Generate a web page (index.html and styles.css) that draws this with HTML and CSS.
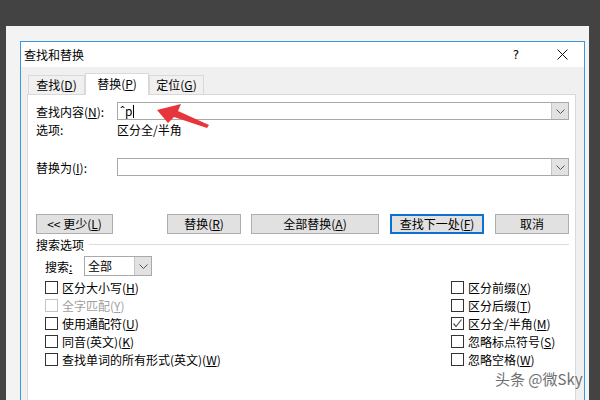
FILE: index.html
```html
<!DOCTYPE html>
<html lang="zh">
<head>
<meta charset="utf-8">
<title>查找和替换</title>
<link rel="stylesheet" href="styles.css">
</head>
<body>
<div class="screen">
  <div class="outer">
    <div class="dialog">
      <div class="titlebar">
        <span class="title">查找和替换</span>
        <span class="help">?</span>
        <span class="close">
          <svg width="11" height="11" viewBox="0 0 11 11"><path d="M0.5 0.5 L10.5 10.5 M10.5 0.5 L0.5 10.5" stroke="#111" stroke-width="1" fill="none"/></svg>
        </span>
      </div>
      <div class="dbody">
        <div class="tabs">
          <div class="tab t1">查找(<u>D</u>)</div>
          <div class="tab active">替换(<u>P</u>)</div>
          <div class="tab t3">定位(<u>G</u>)</div>
        </div>
        <div class="panel">
          <div class="row find">
            <span class="label">查找内容(<u>N</u>):</span>
            <div class="combo">
              <span class="val">ˆp<span class="caret"></span></span>
              <span class="drop"><svg width="9" height="5" viewBox="0 0 9 5"><path d="M0.5 0.5 L4.5 4.5 L8.5 0.5" stroke="#555" fill="none"/></svg></span>
            </div>
          </div>
          <div class="row opts">
            <span class="label">选项:</span>
            <span>区分全/半角</span>
          </div>
          <div class="row replace">
            <span class="label">替换为(<u>I</u>):</span>
            <div class="combo">
              <span class="val"></span>
              <span class="drop"><svg width="9" height="5" viewBox="0 0 9 5"><path d="M0.5 0.5 L4.5 4.5 L8.5 0.5" stroke="#555" fill="none"/></svg></span>
            </div>
          </div>
          <div class="buttons">
            <div class="btn more">&lt;&lt; 更少(<u>L</u>)</div>
            <div class="spacer"></div>
            <div class="btn rep">替换(<u>R</u>)</div>
            <div class="btn all">全部替换(<u>A</u>)</div>
            <div class="btn next">查找下一处(<u>F</u>)</div>
            <div class="btn cancel">取消</div>
          </div>
          <div class="group">
            <span>搜索选项</span>
            <span class="rule"></span>
          </div>
          <div class="search">
            <span class="slabel">搜索<u>:</u></span>
            <div class="select">
              <span class="val">全部</span>
              <span class="drop sdrop"><svg width="9" height="5" viewBox="0 0 9 5"><path d="M0.5 0.5 L4.5 4.5 L8.5 0.5" stroke="#555" fill="none"/></svg></span>
            </div>
          </div>
          <div class="checks">
            <div class="col">
              <div class="chk"><span class="box"></span>区分大小写(<u>H</u>)</div>
              <div class="chk disabled"><span class="box"></span>全字匹配(<u>Y</u>)</div>
              <div class="chk"><span class="box"></span>使用通配符(<u>U</u>)</div>
              <div class="chk"><span class="box"></span>同音(英文)(<u>K</u>)</div>
              <div class="chk"><span class="box"></span>查找单词的所有形式(英文)(<u>W</u>)</div>
            </div>
            <div class="col">
              <div class="chk"><span class="box"></span>区分前缀(<u>X</u>)</div>
              <div class="chk"><span class="box"></span>区分后缀(<u>T</u>)</div>
              <div class="chk"><span class="box checked"><svg width="11" height="11" viewBox="0 0 11 11"><path d="M1.5 5.5 L4 8.5 L9.5 1.5" stroke="#555" stroke-width="1.2" fill="none"/></svg></span>区分全/半角(<u>M</u>)</div>
              <div class="chk"><span class="box"></span>忽略标点符号(<u>S</u>)</div>
              <div class="chk"><span class="box"></span>忽略空格(<u>W</u>)</div>
            </div>
          </div>
        </div>
      </div>
    </div>
  </div>
</div>
<svg class="arrow" width="70" height="35" viewBox="0 0 70 35">
  <polygon points="7,10 31,4 28,11 59,25 57,28 24,17 18,23" fill="#e6363c"/>
</svg>
<div class="watermark">头条 @微Sky</div>
</body>
</html>
```
FILE: styles.css
```css
* { box-sizing: border-box; margin: 0; padding: 0; }
html, body { width: 600px; height: 400px; overflow: hidden; }
body {
  background: #434343;
  font-family: "Noto Sans CJK SC", "Noto Sans", sans-serif;
  font-size: 12px;
  color: #000;
  position: relative;
}
u { text-decoration: underline; text-underline-offset: 1px; }

.screen { padding-top: 26px; }
.outer {
  margin-left: 6px;
  width: 583px;
  height: 374px;
  background: #f3f3f3;
  padding: 15px 0 0 14px;
  overflow: hidden;
}
.dialog {
  width: 565px;
  height: 370px;
  border: 1px solid #3a96dd;
  background: #f0f0f0;
  display: flex;
  flex-direction: column;
}
.titlebar {
  flex: none;
  height: 25px;
  background: #fff;
  display: flex;
  align-items: center;
  padding-left: 3px;
}
.title { flex: 1; line-height: 25px; }
.help { width: 50px; text-align: center; font-family: "DejaVu Sans", sans-serif; font-size: 12px; }
.close { width: 43px; display: flex; justify-content: center; align-items: center; }

.dbody {
  flex: 1;
  display: flex;
  flex-direction: column;
  padding: 6px 8px 0 6px;
}
.tabs {
  flex: none;
  height: 21px;
  display: flex;
  align-items: flex-end;
  padding-left: 1px;
}
.tab {
  height: 19px;
  border: 1px solid #d9d9d9;
  border-bottom: none;
  background: #f0f0f0;
  display: flex;
  align-items: center;
  justify-content: center;
  line-height: 1;
}
.t1 { width: 57px; }
.t3 { width: 55px; }
.tab.active {
  width: 64px;
  height: 22px;
  margin-bottom: -1px;
  background: #fff;
  position: relative;
  z-index: 1;
  padding-bottom: 2px;
}
.panel {
  flex: 1;
  background: #fff;
  border: 1px solid #d9d9d9;
  border-bottom: none;
  padding: 0 6px 0 8px;
}

.row { display: flex; align-items: center; }
.label { width: 81px; flex: none; }
.find { margin-top: 7px; height: 18px; }
.opts { height: 18px; }
.replace { margin-top: 20px; height: 18px; }
.combo {
  flex: 1;
  height: 18px;
  border: 1px solid #a9a9a9;
  background: #fff;
  display: flex;
  align-items: center;
}
.val { flex: 1; padding-left: 2px; display: flex; align-items: center; line-height: 1; }
.caret { display: inline-block; width: 1px; height: 13px; background: #000; margin-left: 1px; }
.drop {
  width: 17px;
  height: 16px;
  background: #e2e2e2;
  border-left: 1px solid #c4c4c4;
  display: flex;
  align-items: center;
  justify-content: center;
  flex: none;
}

.buttons { margin-top: 38px; height: 20px; display: flex; }
.btn {
  height: 20px;
  border: 1px solid #adadad;
  background: #e1e1e1;
  display: flex;
  align-items: center;
  justify-content: center;
  line-height: 1;
  flex: none;
}
.spacer { flex: 1; }
.more { width: 77px; }
.rep { width: 74px; }
.all { width: 128px; margin-left: 10px; }
.next { width: 94px; margin-left: 11px; border: 2px solid #1170cf; }
.cancel { width: 74px; margin-left: 11px; }

.group { height: 20px; display: flex; align-items: center; }
.group .rule { flex: 1; height: 1px; background: #dcdcdc; margin-left: 5px; }

.search { margin-top: 2px; height: 20px; display: flex; align-items: center; padding-left: 9px; }
.slabel { width: 39px; flex: none; }
.select {
  width: 68px;
  height: 20px;
  border: 1px solid #a9a9a9;
  display: flex;
  align-items: center;
}
.select .val { padding-left: 3px; }
.sdrop { height: 18px; width: 17px; }

.checks { margin-top: 2px; display: flex; padding-left: 9px; }
.col { display: flex; flex-direction: column; }
.col:first-child { width: 406px; }
.chk { height: 18px; display: flex; align-items: center; white-space: nowrap; }
.box {
  width: 13px;
  height: 13px;
  border: 1px solid #333;
  background: #fff;
  margin-right: 4px;
  flex: none;
  display: flex;
  align-items: center;
  justify-content: center;
}
.chk.disabled { color: #a0a0a0; }
.chk.disabled .box { border-color: #c4c4c4; }

.arrow { position: absolute; left: 150px; top: 100px; }
.watermark {
  position: absolute;
  left: 495px;
  top: 368px;
  font-size: 15px;
  color: #6f6f6f;
  font-family: "Noto Sans CJK SC", "Noto Sans", sans-serif;
  text-shadow: 0 0 2px #fff;
  white-space: nowrap;
}
```
